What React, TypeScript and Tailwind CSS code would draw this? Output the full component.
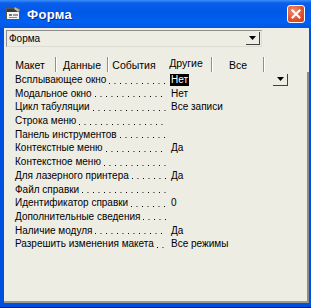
import React from "react";

const rows: [string, string][] = [
  ["Всплывающее окно", "Нет"],
  ["Модальное окно", "Нет"],
  ["Цикл табуляции", "Все записи"],
  ["Строка меню", ""],
  ["Панель инструментов", ""],
  ["Контекстные меню", "Да"],
  ["Контекстное меню", ""],
  ["Для лазерного принтера", "Да"],
  ["Файл справки", ""],
  ["Идентификатор справки", "0"],
  ["Дополнительные сведения", ""],
  ["Наличие модуля", "Да"],
  ["Разрешить изменения макета", "Все режимы"],
];

const tabs = [
  { label: "Макет", sep: true, active: false },
  { label: "Данные", sep: true, active: false },
  { label: "События", sep: false, active: false },
  { label: "Другие", sep: true, active: true },
  { label: "Все", sep: true, active: false },
];

function Arrow() {
  return (
    <svg width="7" height="4" viewBox="0 0 7 4">
      <path d="M0 0h7L3.5 4z" fill="#000" />
    </svg>
  );
}

export default function App() {
  return (
    <div
      className="w-[311px] h-[308px] flex flex-col bg-[#0050E0] border-b-[1px] border-[#00139F]"
      style={{ fontFamily: '"Liberation Sans", Arial, sans-serif' }}
    >
      {/* title bar */}
      <div className="h-[28px] flex items-center bg-[linear-gradient(to_bottom,#3D8FF8_0px,#0A5EEB_3px,#0058E8_12px,#0060F0_22px,#0055E6_28px)]">
        <svg className="ml-[6px]" width="15" height="14" viewBox="0 0 15 14">
          <rect x="0.5" y="1.5" width="13" height="11" fill="#F4F4F4" stroke="#555" />
          <rect x="1" y="2" width="12" height="3" fill="#3A3A3A" />
          <rect x="3" y="7" width="3" height="2" fill="#777" />
          <rect x="7" y="7" width="5" height="2" fill="#999" />
          <rect x="3" y="10" width="8" height="1" fill="#888" />
          <path d="M9 0l5 3-2 2-4-3z" fill="#B0B0B0" />
        </svg>
        <span className="ml-[6px] text-white font-bold text-[13px] leading-none tracking-[0.3px] [text-shadow:1px_1px_0_#0A2A8A]">
          Форма
        </span>
        <div className="flex-1" />
        <div className="mr-[6px] mt-[-1px] w-[18px] h-[18px] rounded-[3px] border border-white bg-[radial-gradient(circle_at_35%_30%,#F09070,#E0502A_60%,#C8401E)] flex items-center justify-center">
          <svg width="10" height="10" viewBox="0 0 10 10">
            <path d="M1.5 1.5l7 7M8.5 1.5l-7 7" stroke="#fff" strokeWidth="2" strokeLinecap="square" />
          </svg>
        </div>
      </div>

      {/* client area */}
      <div className="flex-1 ml-[4px] mr-[2px] mb-[4px] bg-[#EEEDE4] flex flex-col text-black">
        {/* combobox */}
        <div className="mt-[2px] ml-[2px] w-[256px] h-[17px] border-t border-l border-[#8E8E8E] border-r border-r-[#DCDCD4] border-b border-b-[#DCDCD4] flex items-center">
          <span className="ml-[2px] text-[10px] leading-none">Форма</span>
          <div className="flex-1" />
          <div className="w-[14px] h-[13px] mr-[1px] border-r border-b border-[#404040] flex items-center justify-center">
            <Arrow />
          </div>
        </div>

        {/* tabs */}
        <div className="mt-[8px] ml-[1px] h-[17px] flex">
          {tabs.map((t) => (
            <div key={t.label} className="w-[52px] h-[17px] flex">
              <div
                className={
                  "flex-1 flex justify-center text-[10.5px] leading-none " +
                  (t.active ? "pt-[3px]" : "pt-[5px]")
                }
              >
                {t.label}
              </div>
              {t.sep ? (
                <div className="w-[2px] h-[15px] self-end border-l border-[#8F8F8F] border-r border-r-white" />
              ) : (
                <div className="w-[2px]" />
              )}
            </div>
          ))}
        </div>

        {/* property list */}
        <div className="flex-1 border-r-2 border-r-[#8C8C88] border-b-2 border-b-[#9C9A90] pt-[1px]">
          {rows.map(([label, value], i) => (
            <div key={label} className="h-[13.7px] flex items-center text-[10px] leading-[13.7px]">
              <div className="ml-[11px] w-[151px] flex items-center whitespace-nowrap">
                <span>{label}</span>
                <div className="flex-1 ml-[3px] h-[13.7px] bg-[linear-gradient(to_right,#000_1px,transparent_1px)] bg-[length:5.5px_1px] bg-repeat-x bg-[position:0_9.5px]" />
              </div>
              <div className="ml-[5px] flex-1 flex items-center">
                {i === 0 ? (
                  <>
                    <span className="bg-black text-white px-[1px] leading-[12px] ml-[-1px]">{value}</span>
                    <div className="flex-1" />
                    <div className="mr-[19px] w-[15px] h-[12px] border-r border-b border-[#404040] flex items-center justify-center">
                      <Arrow />
                    </div>
                  </>
                ) : (
                  <span>{value}</span>
                )}
              </div>
            </div>
          ))}
        </div>
      </div>
    </div>
  );
}
